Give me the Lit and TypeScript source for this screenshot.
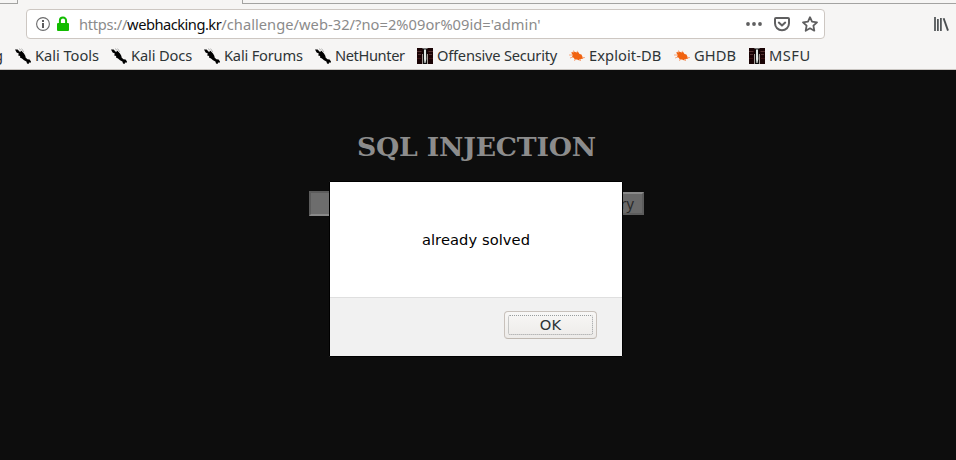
import { LitElement, html, css, svg } from "lit";
import { customElement } from "lit/decorators.js";
import { styleMap } from "lit/directives/style-map.js";

const dragon = svg`<svg width="16" height="16" viewBox="0 0 16 16">
  <path d="M0 1.6L2.6 1.6 5 4 6.4 2.8 9 5.4 10.4 8 10.6 9.6 12.4 11.2 14.6 11.6 16 13.6 15.6 14.8 14 14.6 13.6 16 12 15.6 11.4 13.4 9 12.2 7 10.4 5 9.4 5.2 8 3.2 7.4 3.8 5.6 1.6 4.4Z" fill="#000"/>
  <path d="M4 .6L6.2 2.4M6.6 .6L8.8 4" stroke="#888" stroke-width=".6" fill="none"/></svg>`;

const offsec = svg`<svg width="16" height="16" viewBox="0 0 16 16">
  <rect width="16" height="16" fill="#1a0405"/>
  <path d="M0 3h4.5v1H0zM1 6h3v1H1zM11.5 3H16v1h-4.5zM12 6h3v1h-3z" fill="#533130"/>
  <path d="M0 10h4v1H0zM12 10h4v1h-4z" fill="#3a1011"/>
  <path d="M5.4 0h5.2v1H5.4z" fill="#777"/>
  <path d="M5 6h1v10H5zM10 6h1v10h-1z" fill="#a59b95"/>
  <path d="M6 1h4v15H6z" fill="#101010"/>
  <path d="M7 1.5h2V5l.3 6-.8 4h-1L7 11z" fill="#e3e9e5"/></svg>`;

const bug = svg`<svg width="16" height="16" viewBox="0 0 16 16">
  <path d="M2.2 4.6L5 3.4 7 4.2 9 3.8 10.5 6 12.4 6.6 13.2 8.2 14.4 10.4 12 11 10.4 12.4 8 11.6 5.6 11.6 5 10 3 8.8 3.6 7Z" fill="#f1620f"/>
  <path d="M4 5L4.6 2.4M7.5 5L8.6 2.8M3 7H0M4 9L1 10M6.5 11L5.4 13M10 11L12 13M13 9.4L16 9.6" stroke="#f6a377" stroke-width=".9" fill="none"/></svg>`;

const bookmarks = [
  { icon: dragon, label: "Kali Tools", step: 96, spacing: -0.04 },
  { icon: dragon, label: "Kali Docs", step: 93, spacing: -0.14 },
  { icon: dragon, label: "Kali Forums", step: 111, spacing: -0.2 },
  { icon: dragon, label: "NetHunter", step: 102, spacing: -0.4 },
  { icon: offsec, label: "Offensive Security", step: 152, spacing: -0.23 },
  { icon: bug, label: "Exploit-DB", step: 105, spacing: 0.08 },
  { icon: bug, label: "GHDB", step: 75, spacing: 0.1 },
  { icon: offsec, label: "MSFU", step: 74, spacing: 0.5 },
];

@customElement("app-root")
export class AppRoot extends LitElement {
  static styles = css`
    :host { display: flex; flex-direction: column; position: relative; height: 460px; overflow: hidden; background: #0d0d0d; }
    * { box-sizing: border-box; }
    svg { display: block; flex: none; }
    .chrome { height: 70px; flex: none; background: #f6f5f4; border-bottom: 1px solid #c9c5c1; font-family: "Noto Sans", sans-serif; color: #2e3436; }
    .tabs { height: 4px; display: flex; justify-content: space-between; }
    .tab-left { width: 18px; border: solid #a3a3a1; border-width: 0 1px 1px 0; }
    .tab-right { width: 714px; border: solid #a3a3a1; border-width: 0 0 1px 1px; }
    .nav { height: 40px; display: flex; align-items: center; padding: 0 7px 0 26px; justify-content: space-between; }
    .url { width: 799px; height: 30px; background: #fff; border: 1px solid #cdc7c2; border-radius: 4px; display: flex; align-items: center; padding: 0 6px 0 9px; }
    .lock { margin-left: 5px; }
    .address { margin-left: 8px; flex: 1; font-size: 14.67px; line-height: 20px; color: #8b8b8b; white-space: nowrap; letter-spacing: -0.3px; }
    .host { color: #0c0c0d; letter-spacing: -0.5px; }
    .path { letter-spacing: 0.04px; }
    .actions { display: flex; gap: 12px; }
    .bookmarks { height: 23px; display: flex; align-items: center; font-size: 14.67px; line-height: 20px; white-space: nowrap; }
    .clip { width: 15px; height: 20px; display: flex; justify-content: flex-end; padding-right: 12px; flex: none; }
    .bookmark { display: flex; align-items: center; gap: 4px; flex: none; }
    .label { display: block; margin-top: -1px; }
    .page { flex: 1; display: flex; flex-direction: column; align-items: center; }
    h1 { margin: 61px 3px 0 0; font: bold 26.67px/32px "DejaVu Serif", serif; color: #8c8c8c; letter-spacing: -0.18px; white-space: nowrap; }
    .form { width: 335px; height: 25px; margin: 28px 3px 0 0; display: flex; justify-content: space-between; align-items: center; }
    .field { width: 200px; height: 25px; background: #6d6d6d; border: 2px solid; border-color: #5c5c5c #898989 #898989 #5c5c5c; }
    .submit { width: 60px; height: 23px; background: #696969; border: 2px solid; border-color: #898989 #5c5c5c #5c5c5c #898989; color: #292929; font: 14.67px/18px "Noto Sans", sans-serif; text-align: right; padding: 0 8px 0 0; }
    .dialog { position: absolute; left: 329px; top: 181px; width: 294px; height: 176px; border: 1px solid #000; border-radius: 1px; background: #fff; display: flex; flex-direction: column; font-family: "DejaVu Sans", sans-serif; }
    .message { flex: 1; display: flex; align-items: center; justify-content: center; padding-bottom: 1px; font-size: 14.67px; letter-spacing: 0.08px; color: #000; }
    .footer { height: 59px; background: #f1f1f1; border-top: 1px solid #dfdfdf; display: flex; justify-content: flex-end; padding: 13px 25px 0 0; }
    .ok { width: 93px; height: 28px; padding: 3px; border: 1px solid #c8c1bb; border-bottom-color: #bfb8b1; border-radius: 4px; background: linear-gradient(#f8f7f6, #edebe9); display: flex; }
    .focus { flex: 1; border: 1px dotted #999d9e; border-radius: 2px; display: flex; align-items: center; justify-content: center; padding-bottom: 2px; font-size: 14.67px; letter-spacing: 0.3px; color: #2e3436; }
  `;

  render() {
    return html`
      <div class="chrome">
        <div class="tabs"><div class="tab-left"></div><div class="tab-right"></div></div>
        <div class="nav">
          <div class="url">
            <svg width="14" height="14" viewBox="0 0 14 14"><circle cx="7" cy="7" r="6.4" fill="none" stroke="#6b6b6c" stroke-width="1.1"/><path d="M6 6h2v5H6zM6 3h2v2H6z" fill="#5c5c5d"/></svg>
            <svg class="lock" width="16" height="16" viewBox="0 0 16 16"><path d="M4.9 8V4.6a3.1 3.1 0 0 1 6.2 0V8" fill="none" stroke="#12bc00" stroke-width="2"/><rect x="2" y="7" width="12" height="8" rx="1" fill="#12bc00"/></svg>
            <div class="address">https://<span class="host">webhacking.kr</span><span class="path">/challenge/web-32/?no=2%09or%09id='admin'</span></div>
            <div class="actions">
              <svg width="16" height="16" viewBox="0 0 16 16" fill="#5f5f60"><circle cx="2" cy="8" r="1.9"/><circle cx="8" cy="8" r="1.9"/><circle cx="14" cy="8" r="1.9"/></svg>
              <svg width="16" height="16" viewBox="0 0 16 16" fill="none" stroke="#5f5f60" stroke-width="2" stroke-linecap="round" stroke-linejoin="round"><path d="M2 2h12a1 1 0 0 1 1 1v4.3a7 7 0 0 1-14 0V3a1 1 0 0 1 1-1Z"/><path d="M4.8 6.6L8 9.6l3.2-3"/></svg>
              <svg width="16" height="16" viewBox="0 0 16 16" fill="none" stroke="#5f5f60" stroke-width="1.8" stroke-linejoin="round"><path d="M8 1.2l2 4.5 5 .6-3.6 3.4.9 5L8 12.3l-4.3 2.4.9-5L1 6.3l5-.6Z"/></svg>
            </div>
          </div>
          <svg width="16" height="16" viewBox="0 0 16 16" stroke="#4b4f51" fill="none"><path d="M2 1v14M4.9 3v12M7.9 2v13" stroke-width="1.7"/><path d="M10.6 2.2L15 14.6" stroke-width="1.9"/></svg>
        </div>
        <div class="bookmarks">
          <div class="clip"><span class="label">g</span></div>
          ${bookmarks.map(
            (b) => html`<div class="bookmark" style=${styleMap({ width: `${b.step}px` })}>
              ${b.icon}<span class="label" style=${styleMap({ letterSpacing: `${b.spacing}px` })}>${b.label}</span>
            </div>`
          )}
        </div>
      </div>
      <div class="page">
        <h1>SQL INJECTION</h1>
        <div class="form"><div class="field"></div><div class="submit">query</div></div>
      </div>
      <div class="dialog">
        <div class="message">already solved</div>
        <div class="footer"><div class="ok"><div class="focus">OK</div></div></div>
      </div>
    `;
  }
}
